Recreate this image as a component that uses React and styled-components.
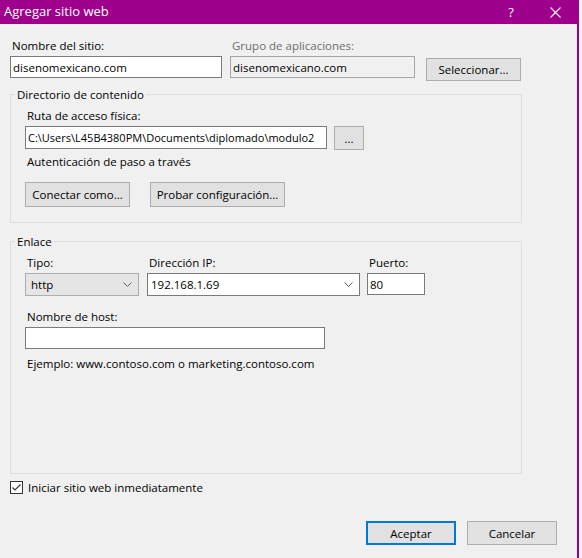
import React from 'react';
import styled, { createGlobalStyle } from 'styled-components';

const Global = createGlobalStyle`
  html, body {
    margin: 0;
    padding: 0;
    background: #f4f4f4;
  }
  body {
    font-family: "Open Sans", "Noto Sans", sans-serif;
    font-size: 11.5px;
    color: #000;
  }
`;

const Window = styled.div`
  width: 577px;
  height: 558px;
  background: #f0f0f0;
  border-right: 2px solid #9e008b;
  display: flex;
  flex-direction: column;
  overflow: hidden;
`;

const TitleBar = styled.div`
  height: 24px;
  background: #9e008b;
  color: #fff;
  display: flex;
  align-items: center;
  padding-left: 4px;
  font-size: 13px;
`;

const Title = styled.span`
  flex: 1;
  margin-top: -2px;
`;

const TitleButton = styled.span`
  width: 44px;
  display: flex;
  justify-content: center;
  align-items: center;
  font-size: 13px;
`;

const Body = styled.div`
  flex: 1;
  display: flex;
  flex-direction: column;
  padding: 14px 0 0 10px;
`;

const Row = styled.div`
  display: flex;
  align-items: flex-start;
  gap: ${p => p.$gap || 0}px;
  margin-top: ${p => p.$mt || 0}px;
`;

const Field = styled.div`
  display: flex;
  flex-direction: column;
  gap: 3px;
  margin-left: ${p => p.$ml || 0}px;
  margin-top: ${p => p.$mt || 0}px;
`;

const Label = styled.span`
  line-height: 15px;
  padding-left: ${p => (p.$flush ? 0 : 2)}px;
  color: ${p => (p.$disabled ? '#6d6d6d' : '#000')};
  margin-top: ${p => p.$mt || 0}px;
`;

const Input = styled.div`
  box-sizing: border-box;
  width: ${p => p.$w}px;
  height: ${p => p.$h || 22}px;
  border: 1px solid ${p => (p.$disabled ? '#a6a6a6' : '#7a7a7a')};
  background: ${p => (p.$disabled ? '#f0f0f0' : '#fff')};
  padding: 0 2px;
  display: flex;
  align-items: center;
  white-space: nowrap;
  overflow: hidden;
  font-size: ${p => p.$fs || 11.5}px;
`;

const Select = styled.div`
  box-sizing: border-box;
  width: ${p => p.$w}px;
  height: 23px;
  border: 1px solid ${p => (p.$gray ? '#adadad' : '#7a7a7a')};
  background: ${p => (p.$gray ? '#e5e5e5' : '#fff')};
  display: flex;
  align-items: center;
  padding: 0 6px 0 ${p => (p.$gray ? 5 : 3)}px;
  span { flex: 1; }
`;

const Button = styled.div`
  box-sizing: border-box;
  width: ${p => p.$w}px;
  height: ${p => p.$h || 24}px;
  margin-top: ${p => p.$mt || 0}px;
  margin-left: ${p => p.$ml || 0}px;
  background: #e1e1e1;
  border: ${p => (p.$primary ? '2px solid #0078d7' : '1px solid #adadad')};
  display: flex;
  align-items: center;
  justify-content: center;
`;

const Group = styled.fieldset`
  box-sizing: border-box;
  width: 512px;
  margin: ${p => p.$mt}px 0 0 0;
  min-height: ${p => p.$h}px;
  border: 1px solid #dcdcdc;
  padding: 6px 0 0 14px;
  display: flex;
  flex-direction: column;
  align-items: flex-start;
`;

const Legend = styled.legend`
  line-height: 15px;
  padding: 0 2px;
  margin-left: -10px;
`;

const Check = styled.div`
  display: flex;
  align-items: center;
  gap: 5px;
  margin-top: 6px;
`;

const Footer = styled.div`
  display: flex;
  justify-content: flex-end;
  gap: 11px;
  padding-right: 20px;
  margin-top: 26px;
`;

const Chevron = () => (
  <svg width="9" height="5" viewBox="0 0 9 5">
    <polyline points="0.5,0.5 4.5,4.5 8.5,0.5" fill="none" stroke="#606060" strokeWidth="1" />
  </svg>
);

export default function App() {
  return (
    <>
      <Global />
      <Window>
        <TitleBar>
          <Title>Agregar sitio web</Title>
          <TitleButton>?</TitleButton>
          <TitleButton>
            <svg width="11" height="11" viewBox="0 0 11 11">
              <path d="M0.5 0.5 L10.5 10.5 M10.5 0.5 L0.5 10.5" stroke="#fff" strokeWidth="1.1" />
            </svg>
          </TitleButton>
        </TitleBar>
        <Body>
          <Row>
            <Field>
              <Label>Nombre del sitio:</Label>
              <Input $w={212}>disenomexicano.com</Input>
            </Field>
            <Field $ml={8}>
              <Label $disabled>Grupo de aplicaciones:</Label>
              <Input $w={185} $disabled>disenomexicano.com</Input>
            </Field>
            <Button $w={95} $h={23} $mt={20} $ml={11}>Seleccionar...</Button>
          </Row>

          <Group $mt={6} $h={136}>
            <Legend>Directorio de contenido</Legend>
            <Field>
              <Label>Ruta de acceso física:</Label>
              <Row $gap={7}>
                <Input $w={302} $h={23} $fs={11}>C:\Users\L45B4380PM\Documents\diplomado\modulo2</Input>
                <Button $w={30} $h={24}>...</Button>
              </Row>
            </Field>
            <Label $mt={4}>Autenticación de paso a través</Label>
            <Row $gap={20} $mt={13}>
              <Button $w={105} $h={25}>Conectar como...</Button>
              <Button $w={135} $h={25}>Probar configuración...</Button>
            </Row>
          </Group>

          <Group $mt={11} $h={240}>
            <Legend>Enlace</Legend>
            <Row>
              <Field>
                <Label>Tipo:</Label>
                <Select $w={114} $gray><span>http</span><Chevron /></Select>
              </Field>
              <Field $ml={8}>
                <Label>Dirección IP:</Label>
                <Select $w={213}><span>192.168.1.69</span><Chevron /></Select>
              </Field>
              <Field $ml={7}>
                <Label>Puerto:</Label>
                <Input $w={58}>80</Input>
              </Field>
            </Row>
            <Field $mt={13}>
              <Label>Nombre de host:</Label>
              <Input $w={300} />
            </Field>
            <Label $mt={7}>Ejemplo: www.contoso.com o marketing.contoso.com</Label>
          </Group>

          <Check>
            <svg width="13" height="13" viewBox="0 0 13 13">
              <rect x="0.5" y="0.5" width="12" height="12" fill="#fff" stroke="#333" />
              <polyline points="2.5,6.5 5,9 10.5,3.5" fill="none" stroke="#333" strokeWidth="1.2" />
            </svg>
            <Label $flush>Iniciar sitio web inmediatamente</Label>
          </Check>

          <Footer>
            <Button $w={90} $h={24} $primary>Aceptar</Button>
            <Button $w={90} $h={24}>Cancelar</Button>
          </Footer>
        </Body>
      </Window>
    </>
  );
}
